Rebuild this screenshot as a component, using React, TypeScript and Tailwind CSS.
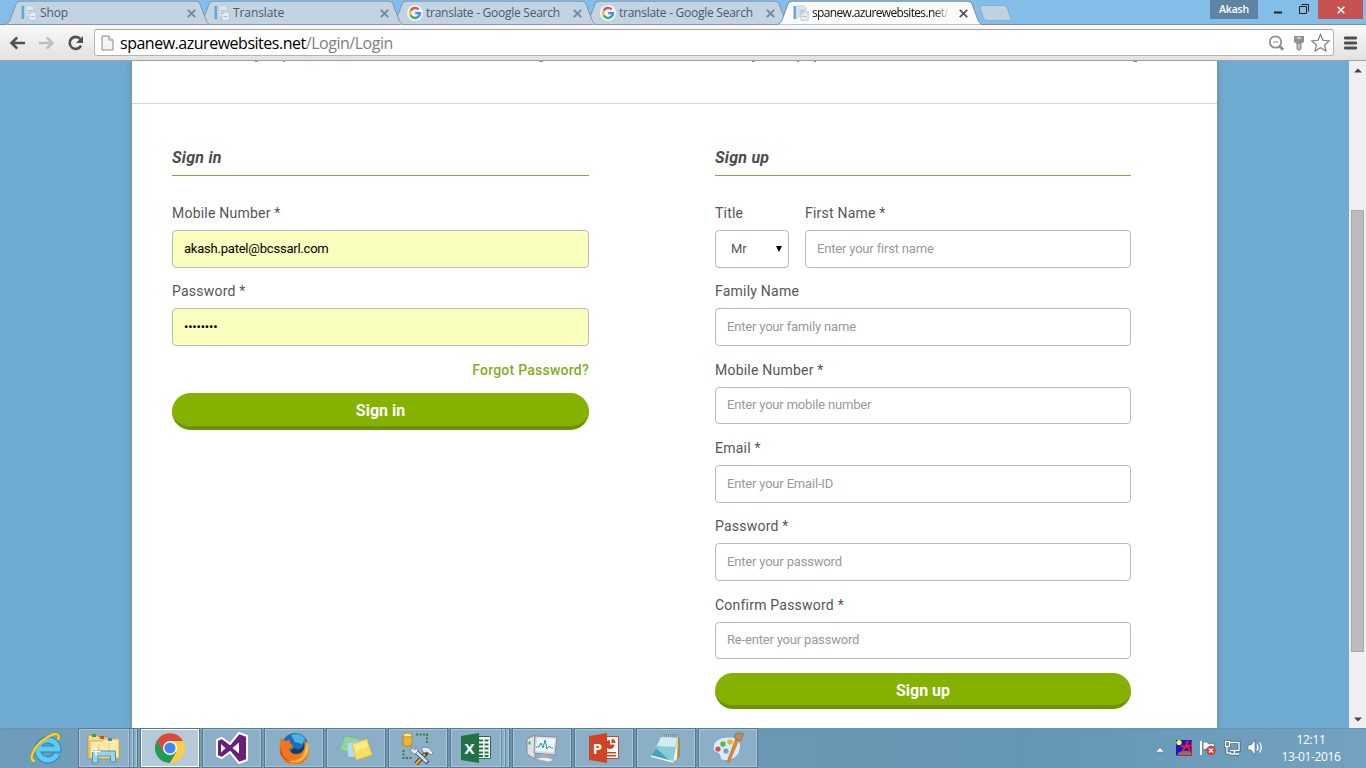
import React from "react";

const uiFont = "font-['Open_Sans','Noto_Sans',sans-serif]";

function DocFavicon() {
  return (
    <svg className="size-4 shrink-0" viewBox="0 0 16 16">
      <rect x="0.5" y="1" width="2.8" height="13" fill="#5fa9dc" />
      <rect x="3.6" y="1" width="0.8" height="13" fill="#cfe0ec" />
      <path d="M5 0.5h6l2 2V12H5z" fill="#dde6ed" stroke="#b5c3ce" strokeWidth="0.6" />
      <path d="M8 7h7.2v8.3H8z" fill="#e6edf2" stroke="#a9b7c2" strokeWidth="0.6" />
      <path d="M6.5 5.5h5M6.5 8h4M9.5 11.5h4" stroke="#a9bfd0" strokeWidth="1" />
    </svg>
  );
}

function GoogleFavicon() {
  return (
    <svg className="size-4 shrink-0" viewBox="0 0 16 16">
      <circle cx="8" cy="8" r="8" fill="#eef3f8" />
      <g fill="none" strokeWidth="2.3">
        <path d="M11.6 4.4A5 5 0 0 0 3.6 5.7" stroke="#e0544a" />
        <path d="M3.7 5.6a5 5 0 0 0 0 4.9" stroke="#f3bd2e" />
        <path d="M3.6 10.3a5 5 0 0 0 7.8 1.4" stroke="#42ac60" />
        <path d="M11.2 11.9A5 5 0 0 0 13 8.1H8.2" stroke="#4c8af0" />
      </g>
    </svg>
  );
}

type TabProps = { title: string; google?: boolean; active?: boolean; z: string };

function Tab({ title, google, active, z }: TabProps) {
  return (
    <div className={`relative -mr-3 flex h-[25px] w-[205px] shrink-0 items-center pl-4 pt-[1px] ${z}`}>
      <svg className="absolute inset-0" width="205" height="25" viewBox="0 0 205 25">
        <path
          d="M0 24.5C3 24 4 22 5 20L11 4Q12.2 1.2 15 1.2H191Q193.8 1.2 195 4L201 20C202 22 203 24 205 24.5Z"
          fill={active ? "#fafafa" : "#c2d3e2"}
        />
        <path
          d="M0 24.5C3 24 4 22 5 20L11 4Q12.2 1.2 15 1.2H191Q193.8 1.2 195 4L201 20C202 22 203 24 205 24.5"
          fill="none"
          stroke={active ? "#6f8ea8" : "#7d99b0"}
          strokeWidth="1"
        />
        {!active && <path d="M3 24.5H202" stroke="#8a97a2" />}
      </svg>
      <div className="relative flex w-full items-center">
        {google ? <GoogleFavicon /> : <DocFavicon />}
        <span
          className={`ml-[3px] w-[138px] whitespace-nowrap text-[12px] leading-4 ${
            active ? "text-[#111] mask-r-from-88%" : "text-[#4c5a66]"
          } ${google ? "tracking-[-0.26px]" : active ? "tracking-[-0.65px]" : "tracking-[-0.1px]"}`}
        >
          {title}
        </span>
        <svg className="ml-[9px]" width="9" height="9" viewBox="0 0 9 9">
          <path d="M.8.8l7.4 7.4M8.200.8L.8 8.200" stroke={active ? "#555" : "#758695"} strokeWidth="1.8" />
        </svg>
      </div>
    </div>
  );
}

function TabStrip() {
  return (
    <div className="relative flex h-[25px] border-b border-[#7d8d9a] bg-[#84bee8] pl-[5px]">
      <Tab title="Shop" z="z-[4]" />
      <Tab title="Translate" z="z-[3]" />
      <Tab title="translate - Google Search" google z="z-[2]" />
      <Tab title="translate - Google Search" google z="z-[1]" />
      <Tab title="spanew.azurewebsites.net/" active z="z-[5]" />
      <svg className="ml-[9px] mt-[5px] shrink-0" width="33" height="16" viewBox="0 0 33 16">
        <path
          d="M2.5.5H25Q27.5.5 28.3 3L31.5 13Q32 15.5 29.5 15.5H8Q5.5 15.5 4.7 13L1.2 2.5Q.6.5 2.5.5Z"
          fill="#bfd2e1"
          stroke="#8fadc5"
        />
      </svg>
      <div className="ml-auto flex h-[19px] items-stretch">
        <div className="flex w-12 items-center justify-center bg-[#5d84a2] text-[10.5px] font-semibold tracking-[-0.2px] text-white">
          Akash
        </div>
        <svg width="60" height="19" viewBox="0 0 60 19">
          <path d="M16 12.5h8" stroke="#222" strokeWidth="2" />
          <path d="M41.5 6.5h7v7h-7zM43.5 4.5h7v7" fill="none" stroke="#222" />
        </svg>
        <div className="mr-[3px] flex w-[45px] items-center justify-center bg-[#c75050]">
          <svg width="8" height="8" viewBox="0 0 8 8">
            <path d="M.7.7l6.6 6.6M7.3.7L.7 7.3" stroke="#fff" strokeWidth="1.6" />
          </svg>
        </div>
      </div>
    </div>
  );
}

function Toolbar() {
  return (
    <div className="flex h-9 items-center border-b border-[#a0a0a0] bg-linear-to-b from-[#f9f9f9] to-[#e2e2e2]">
      <svg width="94" height="34" viewBox="0 0 94 34" fill="none" strokeWidth="2.6">
        <path d="M25 17H12M17.2 11.3L11.5 17l5.7 5.7" stroke="#505050" />
        <path d="M39 17h13M46.8 11.3l5.7 5.7-5.7 5.7" stroke="#bebebe" />
        <path d="M80.3 13A6 6 0 1 0 81 19.6" stroke="#505050" />
        <path d="M83 10v7h-7z" fill="#505050" />
      </svg>
      <div className="flex h-[27px] w-[1240px] items-center rounded-[3px] border border-[#b4b4b4] border-t-[#a3a3a3] bg-white pl-[6px]">
        <svg width="13" height="16" viewBox="0 0 13 16">
          <path d="M1 1h7l4 4v10H1z" fill="#f5f5f5" stroke="#8a8a8a" />
          <path d="M8 1v4h4" fill="#fff" stroke="#8a8a8a" />
        </svg>
        <span className="ml-[6px] whitespace-nowrap text-[16px] leading-6 tracking-[-0.48px] text-black">
          spanew.azurewebsites.net<span className="text-[#808080]">/Login/Login</span>
        </span>
        <svg className="ml-auto mr-[2px]" width="64" height="22" viewBox="0 0 64 22" fill="none">
          <circle cx="8.500" cy="10" r="5.700" stroke="#8c8c8c" strokeWidth="1.7" />
          <path d="M6 10h5" stroke="#8c8c8c" />
          <path d="M12.500 14.200l3.800 3.600" stroke="#8c8c8c" strokeWidth="2.6" />
          <path d="M27 4h10v6l-2.500 1.600h-5L27 10zM29.5 11h5v6l-2.500 2-2.500-2z" fill="#929292" />
          <path d="M30 6h4M32 12v5" stroke="#fff" />
          <path
            d="M53.5 2.500l2.500 5.800 6.200.600-4.700 4.100 1.500 6-5.500-3.200-5.500 3.200 1.500-6-4.700-4.100 6.200-.6z"
            stroke="#808080"
            strokeWidth="1.2"
            fill="#fff"
          />
        </svg>
      </div>
      <svg className="ml-[10px]" width="13" height="14" viewBox="0 0 13 14">
        <path d="M1.2 2h10.600M1.200 7h10.600M1.200 12h10.600" stroke="#505050" strokeWidth="3" strokeLinecap="round" />
      </svg>
    </div>
  );
}

function Heading({ children }: { children: React.ReactNode }) {
  return (
    <h2 className="mb-[27.100px] h-[34px] border-b border-[#86ac28] pt-[4px] text-[16px] font-bold italic leading-6 tracking-[0.25px] text-[#4c4c4c]">
      {children}
    </h2>
  );
}

const label = "block h-5 text-[14px] leading-5 tracking-[0.22px] text-[#555]";
const box = "h-[37.600px] w-full rounded-[4px] border border-[#bbb] px-[11px] pb-px text-[13px] outline-none";

type FieldProps = { name: string; placeholder?: string; value?: string; type?: string };

function Field({ name, placeholder, value, type = "text" }: FieldProps) {
  return (
    <label className="block h-[78.300px] w-full">
      <span className={label}>{name}</span>
      <input
        type={type}
        placeholder={placeholder}
        defaultValue={value}
        className={`mt-[7px] block placeholder:text-[#999] ${box} ${
          value ? "bg-[#faffbd] tracking-[-0.22px] text-black" : "bg-white tracking-[-0.18px]"
        }`}
      />
    </label>
  );
}

function SubmitButton({ children }: { children: React.ReactNode }) {
  return (
    <button className="block h-[36.600px] w-full rounded-full border-b-4 border-[#6c9300] bg-[#85b200] pt-[4px] text-[16px] font-bold leading-7 text-white">
      {children}
    </button>
  );
}

function LoginPage() {
  return (
    <div className="flex h-[667px] overflow-hidden bg-[#70abd2] font-[Roboto,sans-serif]">
      <main className="ml-[132px] w-[1085px] bg-white shadow-[0_0_7px_rgba(110,110,110,0.6)]">
        <div className="h-[43px] border-b border-[#d6d6d6]">
          <svg width="1085" height="2" viewBox="0 0 1085 2">
            <path d="M123 .5h3M151 .5h2M407 .5h4" stroke="#86ac28" />
            <path d="M620 .5h3M665 .5h2M682 .5h2M1001 .5h4" stroke="#888" />
          </svg>
        </div>
        <div className="flex justify-between pl-10 pr-[86px] pt-[38px]">
          <section className="w-[417px]">
            <Heading>Sign in</Heading>
            <Field name="Mobile Number *" value="akash.patel@bcssarl.com" />
            <Field name="Password *" type="password" value="password" />
            <a className="mb-[13.300px] block text-right text-[14px] font-medium leading-5 tracking-[0.24px] text-[#85ac22]">
              Forgot Password?
            </a>
            <SubmitButton>Sign in</SubmitButton>
          </section>
          <section className="w-[416px]">
            <Heading>Sign up</Heading>
            <div className="flex gap-4">
              <div className="w-[74px] shrink-0">
                <span className={label}>Title</span>
                <div className="mt-[7px] flex h-[37.600px] items-center justify-between rounded-[4px] border border-[#bbb] pb-px pl-[15px] pr-[6px] text-[13px] text-[#555]">
                  Mr
                  <svg className="mt-px" width="6" height="6" viewBox="0 0 6 6">
                    <path d="M0 0h6L3 6z" fill="#000" />
                  </svg>
                </div>
              </div>
              <Field name="First Name *" placeholder="Enter your first name" />
            </div>
            <Field name="Family Name" placeholder="Enter your family name" />
            <Field name="Mobile Number *" placeholder="Enter your mobile number" />
            <Field name="Email *" placeholder="Enter your Email-ID" />
            <Field name="Password *" placeholder="Enter your password" type="password" />
            <Field name="Confirm Password *" placeholder="Re-enter your password" type="password" />
            <SubmitButton>Sign up</SubmitButton>
          </section>
        </div>
      </main>
      <div className="ml-auto flex w-[17px] flex-col items-center bg-[#f0f0f0] pb-[6px] pt-[7px]">
        <svg width="8" height="5" viewBox="0 0 8 5">
          <path d="M0 4.500L4 .5l4 4z" fill="#444" />
        </svg>
        <div className="mt-[137px] h-[442px] w-[13px] border border-[#a8a8a8] bg-[#bcbcbc]" />
        <svg className="mt-auto" width="8" height="5" viewBox="0 0 8 5">
          <path d="M0 .5L4 4.500l4-4z" fill="#444" />
        </svg>
      </div>
    </div>
  );
}

function IeIcon() {
  return (
    <svg width="32" height="32" viewBox="0 0 32 32" fill="none">
      <path d="M27 22a10 10 0 1 1 .8-5H10" stroke="#2287c4" strokeWidth="7" />
      <path d="M27 22a10 10 0 1 1 .8-5H10" stroke="#5fcbf4" strokeWidth="5" />
      <path d="M5 29C-3 29 4 14 15 7 25 0 31 1 28 8" stroke="#b98a10" strokeWidth="3.200" />
      <path d="M5 29C-3 29 4 14 15 7 25 0 31 1 28 8" stroke="#fbd12f" strokeWidth="2.200" />
    </svg>
  );
}

function ExplorerIcon() {
  return (
    <svg width="34" height="32" viewBox="0 0 34 32">
      <path d="M1 6V3h9l2 2h9l2 3h9v19H1z" fill="#f3dc86" stroke="#b8963e" />
      <path d="M3 9h12l2-2h15v19H3z" fill="#fbebA5" stroke="#cdae55" />
      <path d="M12 12v14M22 11v15" stroke="#e3c976" />
      <path d="M5 2h4v3H5z" fill="#28a73a" />
      <path d="M13 4h4v3h-4z" fill="#d9483b" />
      <path d="M21 6h4v3h-4z" fill="#3290db" />
      <path d="M5.500 31V19h23v11h-5v-6H11v7z" fill="#9bd3ee" stroke="#4b91b8" />
      <path d="M9 15v9M4.500 19.500h9" stroke="#fff" strokeWidth="1.200" />
    </svg>
  );
}

function ChromeIcon() {
  return (
    <svg width="30" height="30" viewBox="0 0 30 30">
      <circle cx="15" cy="15" r="15" fill="#fcc934" />
      <path d="M15 15L2 7.500A15 15 0 0 0 15 30l6.500-11z" fill="#219b57" />
      <path d="M2 7.500A15 15 0 0 1 28 8H15l-6.500 11z" fill="#dc4a3e" />
      <path d="M28 8H15l6.500 11L15 30A15 15 0 0 0 28 8z" fill="#fbcf4b" />
      <circle cx="15" cy="15" r="7" fill="#fff" />
      <circle cx="15" cy="15" r="5.600" fill="#4285f4" />
    </svg>
  );
}

function VisualStudioIcon() {
  return (
    <svg width="34" height="32" viewBox="0 0 34 32">
      <path d="M2 8l5-2 8 6L24 1l8 3v24l-8 3-9-11-8 6-5-2z" fill="#68217a" stroke="#fff" strokeWidth="2" strokeLinejoin="round" />
      <path d="M6 12v8.500l4.500-4.300zM24 10.500v11l-6.500-5.500z" fill="#fff" />
    </svg>
  );
}

function FirefoxIcon() {
  return (
    <svg width="32" height="32" viewBox="0 0 32 32">
      <circle cx="17" cy="14" r="13" fill="#1e6fb7" />
      <path d="M13 3q9-3 14 4l-3 5-7-2z" fill="#48b5e6" />
      <path d="M16 16q6 4 10-4v9l-7 4-9-3z" fill="#123c72" />
      <path
        d="M3 6l4 3 5-1q-1 4 3 5l-1 3-3 1q2 5 7 5 6 0 8-5 2-6-1-10 6 4 6 12A14.500 14.500 0 0 1 2 18Q1 11 3 6z"
        fill="#ee7521"
      />
      <path d="M29 9q5 13-6 20-6 3-12 0 11 1 15-8 2-5 3-12z" fill="#fbc03a" />
      <path d="M3 15q0 10 9 14-7-1-10-8z" fill="#d24a18" />
    </svg>
  );
}

function NotesIcon() {
  return (
    <svg width="34" height="28" viewBox="0 0 34 28">
      <path d="M6 2l14 3-4 15L1 16z" fill="#92d696" stroke="#6fbb77" strokeWidth=".6" />
      <path d="M8 9l15-3 3 17H9z" fill="#b4dcf9" stroke="#82b8df" strokeWidth=".6" />
      <path d="M13 10l15-5 5 16-16 5z" fill="#f9df60" stroke="#d9b63b" strokeWidth=".6" />
      <path d="M15 11l12-4 2 6-12 4z" fill="#fdf0a0" opacity=".7" />
    </svg>
  );
}

function SqlToolsIcon() {
  return (
    <svg width="34" height="33" viewBox="0 0 34 33">
      <path d="M2 3v10q4.500 3 9 0V3z" fill="#eeb62d" stroke="#a9771a" strokeWidth=".7" />
      <ellipse cx="6.500" cy="3" rx="4.500" ry="2" fill="#ffe58c" stroke="#a9771a" strokeWidth=".7" />
      <path d="M15 2.500h11v10M2.500 18v8h9" fill="none" stroke="#3b7d30" strokeWidth="2" strokeDasharray="2 1.500" />
      <path d="M27 19L15 32" stroke="#4b3c2a" strokeWidth="4.400" />
      <path d="M24 22L15 32" stroke="#e6a334" strokeWidth="2.600" />
      <path d="M13 18l14 13" stroke="#345992" strokeWidth="4.400" />
      <path d="M12 17l14 13" stroke="#d8e2ef" strokeWidth="2.600" />
      <path d="M20 16q6-2 9 1l3 4-2 2-4-3-3 1z" fill="#e5e8ec" stroke="#6f7f91" strokeWidth=".8" />
      <path d="M10 15v5l4 2 3-3-2-4-1 3-2-1z" fill="#e9eef5" stroke="#5e7391" strokeWidth=".7" />
    </svg>
  );
}

function OfficeIcon({ letter, color, children }: { letter: string; color: string; children: React.ReactNode }) {
  return (
    <svg width="30" height="30" viewBox="0 0 30 30">
      <path d="M15 3.500h14.500v22H15z" fill="#fff" stroke={color} />
      {children}
      <path d="M0 3l18-3v30L0 27z" fill={color} />
      <text x="8.500" y="20.500" fill="#fff" fontSize="15" fontWeight="bold" textAnchor="middle" fontFamily="Open Sans, sans-serif">
        {letter}
      </text>
    </svg>
  );
}

function MonitorIcon() {
  return (
    <svg width="32" height="30" viewBox="0 0 32 30">
      <path d="M1 6l8-4v24l-8-5z" fill="#dfe2e4" stroke="#858d93" />
      <path d="M2.500 10h2" stroke="#41b649" strokeWidth="3" />
      <path d="M9 3l22 1-2 18-21-2z" fill="#d8dbde" stroke="#8b9196" />
      <path d="M11 5l18 1-2 13-17-1z" fill="#edf8ff" />
      <path d="M10 14h3l2-4 2 5 2-8 2 9 2-3 2 2h2" fill="none" stroke="#3689bf" />
      <path d="M16 21l-3 4 10 2 1-5z" fill="#a7adb1" />
      <path d="M9 26q10-4 19 1l-5 2z" fill="#eceeef" stroke="#969da1" strokeWidth=".6" />
    </svg>
  );
}

function NotepadIcon() {
  return (
    <svg width="32" height="32" viewBox="0 0 32 32">
      <path d="M25 5l5 1v19l-6 4z" fill="#a88c4a" />
      <path d="M25 4l3 1-1 22-4 3z" fill="#f4f1df" />
      <path d="M12 3l16 1-5 26L1 24z" fill="#8ccbdc" />
      <path d="M11 5l16 1-2 9L7 14z" fill="#d2ebef" />
      <path d="M6 16l14 13L1 24z" fill="#48a2bd" />
      <path d="M12 3.500h16" stroke="#8b8b83" strokeWidth="3" strokeDasharray="1 1" />
      <path d="M1 24l22 6" stroke="#f5fafb" strokeWidth="1.500" />
    </svg>
  );
}

function PaintIcon() {
  return (
    <svg width="33" height="32" viewBox="0 0 33 32">
      <path d="M16 5c10-1 14 5 12 13-2 9-12 12-18 10-3-1-1-4-3-6s-6-1-6-6C1 9 8 5 16 5z" fill="#d9ebf7" stroke="#80a9c8" />
      <circle cx="6" cy="17" r="2.600" fill="#df4f44" />
      <circle cx="11" cy="12" r="2.700" fill="#58b947" />
      <circle cx="18" cy="10" r="2.800" fill="#efb42e" />
      <circle cx="14" cy="19" r="2.600" fill="#6ba3cc" />
      <path d="M27 7l-9 22-2 2v-4l8-21z" fill="#e58a30" stroke="#b96722" strokeWidth=".6" />
      <path d="M23 2q4-3 9 0-2 2-3 7l-6-2z" fill="#b98b67" stroke="#8e6644" strokeWidth=".6" />
    </svg>
  );
}

type TaskProps = { active?: boolean; stacked?: boolean; children: React.ReactNode };

function TaskButton({ active, stacked, children }: TaskProps) {
  const edge = active ? "border-white bg-[#b4cad9]" : "border-[#a9c5d6] bg-[#8aafc6]";
  return (
    <div className="flex h-10 w-[60px] border border-[#54788f] bg-[#628ba5]">
      <div className={`flex min-w-0 flex-1 items-center justify-center border ${edge}`}>{children}</div>
      {stacked && (
        <>
          <div className="ml-px w-[3px] border-y border-r border-[#a9c5d6] bg-[#8aafc6]" />
          <div className="ml-px w-[3px] border-y border-r border-[#a9c5d6] bg-[#8aafc6]" />
        </>
      )}
    </div>
  );
}

function Tray() {
  return (
    <div className="ml-auto flex items-center pr-[25px] text-white">
      <svg width="108" height="20" viewBox="0 0 108 20">
        <path d="M0 14l4-4.500L8 14z" fill="#fff" stroke="#47687c" strokeWidth=".4" />
        <path d="M20 2h16v15H20z" fill="#1414dc" />
        <path d="M20.500 17.500h15V3" fill="none" stroke="#e11" />
        <circle cx="23" cy="4.500" r="2.600" fill="#ff2" />
        <path d="M22 15q5-4 13-1v3H22z" fill="#777" />
        <path d="M30 5l3-2M26 14l5-8 3 8M25 8l6 1 4-2" stroke="#ed2020" strokeWidth="1.800" fill="none" />
        <path d="M45 3v14" stroke="#fff" strokeWidth="2" />
        <path d="M47 4q4-1 5 1t6 0v8q-4 1-6-1t-5 0z" fill="#f7f7f7" stroke="#476579" strokeWidth=".7" />
        <circle cx="55" cy="12.500" r="4.700" fill="#d93a35" />
        <path d="M53 10.500l4 4M57 10.500l-4 4" stroke="#fff" strokeWidth="1.600" />
        <g stroke="#3f6075" strokeWidth="3" fill="none">
          <path d="M74 4.500h9v8h-9M78.500 13v3M74 16h9M71 9v6h4M69.500 3.500h4v5h-4z" />
        </g>
        <g stroke="#fff" strokeWidth="1.400" fill="none">
          <path d="M74 4.500h9v8h-9M78.500 13v3M74 16h9M71 9v6h4M69.500 3.500h4v5h-4z" />
        </g>
        <path d="M92 7h3l4-5v15l-4-5h-3z" fill="#fff" stroke="#3f6075" strokeWidth=".6" />
        <path d="M101 6.500q2 3 0 6M103.500 4.500q3.500 5 0 10" fill="none" stroke="#fff" strokeWidth="1.200" />
      </svg>
      <div className="ml-[17px] w-[60px] whitespace-nowrap text-center text-[12px] leading-[17px] tracking-[-0.35px]">
        <div>12:11</div>
        <div className="-mx-2">13-01-2016</div>
      </div>
    </div>
  );
}

function Taskbar() {
  return (
    <div className="flex h-10 bg-[linear-gradient(90deg,#6c9bb9,#759fb9_15%,#6895b0_38%,#6a97b3_58%,#6496b4_75%,#72a2bf)] shadow-[inset_0_1px_#6a94ad]">
      <div className="flex w-[78px] items-center justify-center pl-[14px]">
        <IeIcon />
      </div>
      <div className="flex gap-[2px]">
        <TaskButton stacked><ExplorerIcon /></TaskButton>
        <TaskButton active><ChromeIcon /></TaskButton>
        <TaskButton><VisualStudioIcon /></TaskButton>
        <TaskButton><FirefoxIcon /></TaskButton>
        <TaskButton><NotesIcon /></TaskButton>
        <TaskButton><SqlToolsIcon /></TaskButton>
        <TaskButton stacked>
          <OfficeIcon letter="X" color="#217346">
            <path d="M18 7.500h10M18 11.500h10M18 15.500h10M18 19.500h10M18 23h10" stroke="#217346" strokeWidth="2" strokeDasharray="4 1.500" />
          </OfficeIcon>
        </TaskButton>
        <TaskButton><MonitorIcon /></TaskButton>
        <TaskButton>
          <OfficeIcon letter="P" color="#d04423">
            <path d="M21 7a4.500 4.500 0 1 0 4.500 4.500H21zM22.500 6v4h4a4 4 0 0 0-4-4zM18 19h9v1.500h-9zM18 22h9v1.500h-9z" fill="#d04423" />
          </OfficeIcon>
        </TaskButton>
        <TaskButton><NotepadIcon /></TaskButton>
        <TaskButton><PaintIcon /></TaskButton>
      </div>
      <Tray />
    </div>
  );
}

export default function App() {
  return (
    <div className={`h-[768px] w-[1366px] overflow-hidden ${uiFont}`}>
      <TabStrip />
      <Toolbar />
      <LoginPage />
      <Taskbar />
    </div>
  );
}
